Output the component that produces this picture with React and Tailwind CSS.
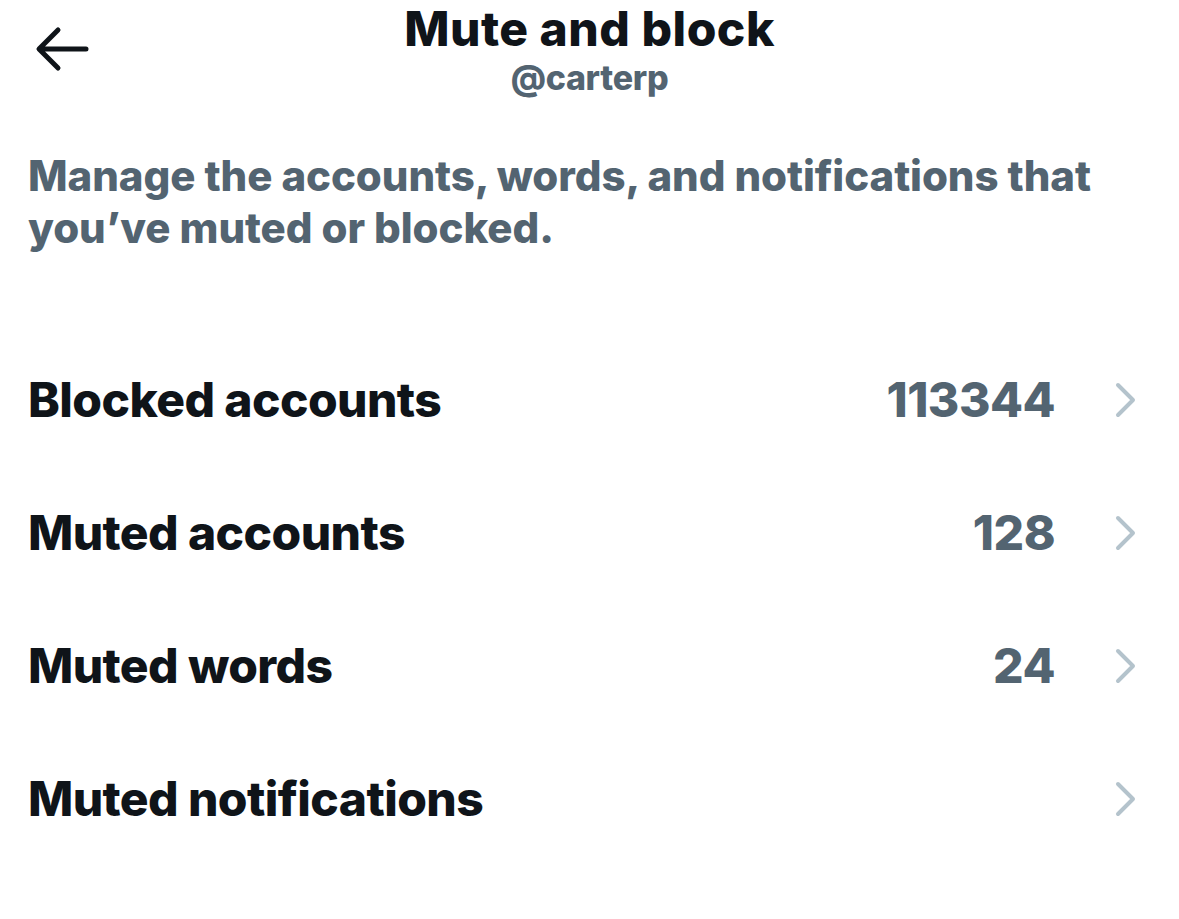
import React from 'react';

const rows = [
  { label: 'Blocked accounts', count: '113344' },
  { label: 'Muted accounts', count: '128' },
  { label: 'Muted words', count: '24' },
  { label: 'Muted notifications', count: '' },
];

const Chevron = () => (
  <svg width="26" height="36" viewBox="0 0 26 36" fill="none" className="shrink-0">
    <path d="M5 3 L20 18 L5 33" stroke="#b4c3cc" strokeWidth="4" strokeLinecap="round" strokeLinejoin="round" />
  </svg>
);

const BackArrow = () => (
  <svg width="56" height="46" viewBox="0 0 56 46" fill="none">
    <path d="M52 23 H6 M24 4 L5 23 L24 42" stroke="#0f1419" strokeWidth="5" strokeLinecap="round" strokeLinejoin="round" />
  </svg>
);

export default function App() {
  return (
    <div className="w-[1179px] h-[919px] bg-white overflow-hidden text-[#0f1419]" style={{ fontFamily: 'Inter, "Liberation Sans", sans-serif' }}>
      <div className="relative h-[120px] flex flex-col items-center">
        <div className="absolute left-[34px] top-[26px]">
          <BackArrow />
        </div>
        <h1 className="text-[48px] leading-[58px] font-extrabold tracking-[0.5px]">Mute and block</h1>
        <div className="text-[34px] leading-[40px] font-extrabold text-[#536471] tracking-[-0.3px]">@carterp</div>
      </div>

      <p className="px-[28px] mt-[30px] text-[42px] leading-[52px] font-extrabold text-[#536471] tracking-[-0.08px]">
        Manage the accounts, words, and notifications that you’ve muted or blocked.
      </p>

      <div className="mt-[79px] flex flex-col">
        {rows.map((r) => (
          <div key={r.label} className="h-[133px] flex items-center pl-[28px] pr-[40px]">
            <span className="flex-1 text-[48px] font-extrabold tracking-[-0.6px]">{r.label}</span>
            <span className="text-[48px] font-extrabold text-[#536471] tracking-[-0.5px] mr-[58px]">{r.count}</span>
            <Chevron />
          </div>
        ))}
      </div>
    </div>
  );
}
